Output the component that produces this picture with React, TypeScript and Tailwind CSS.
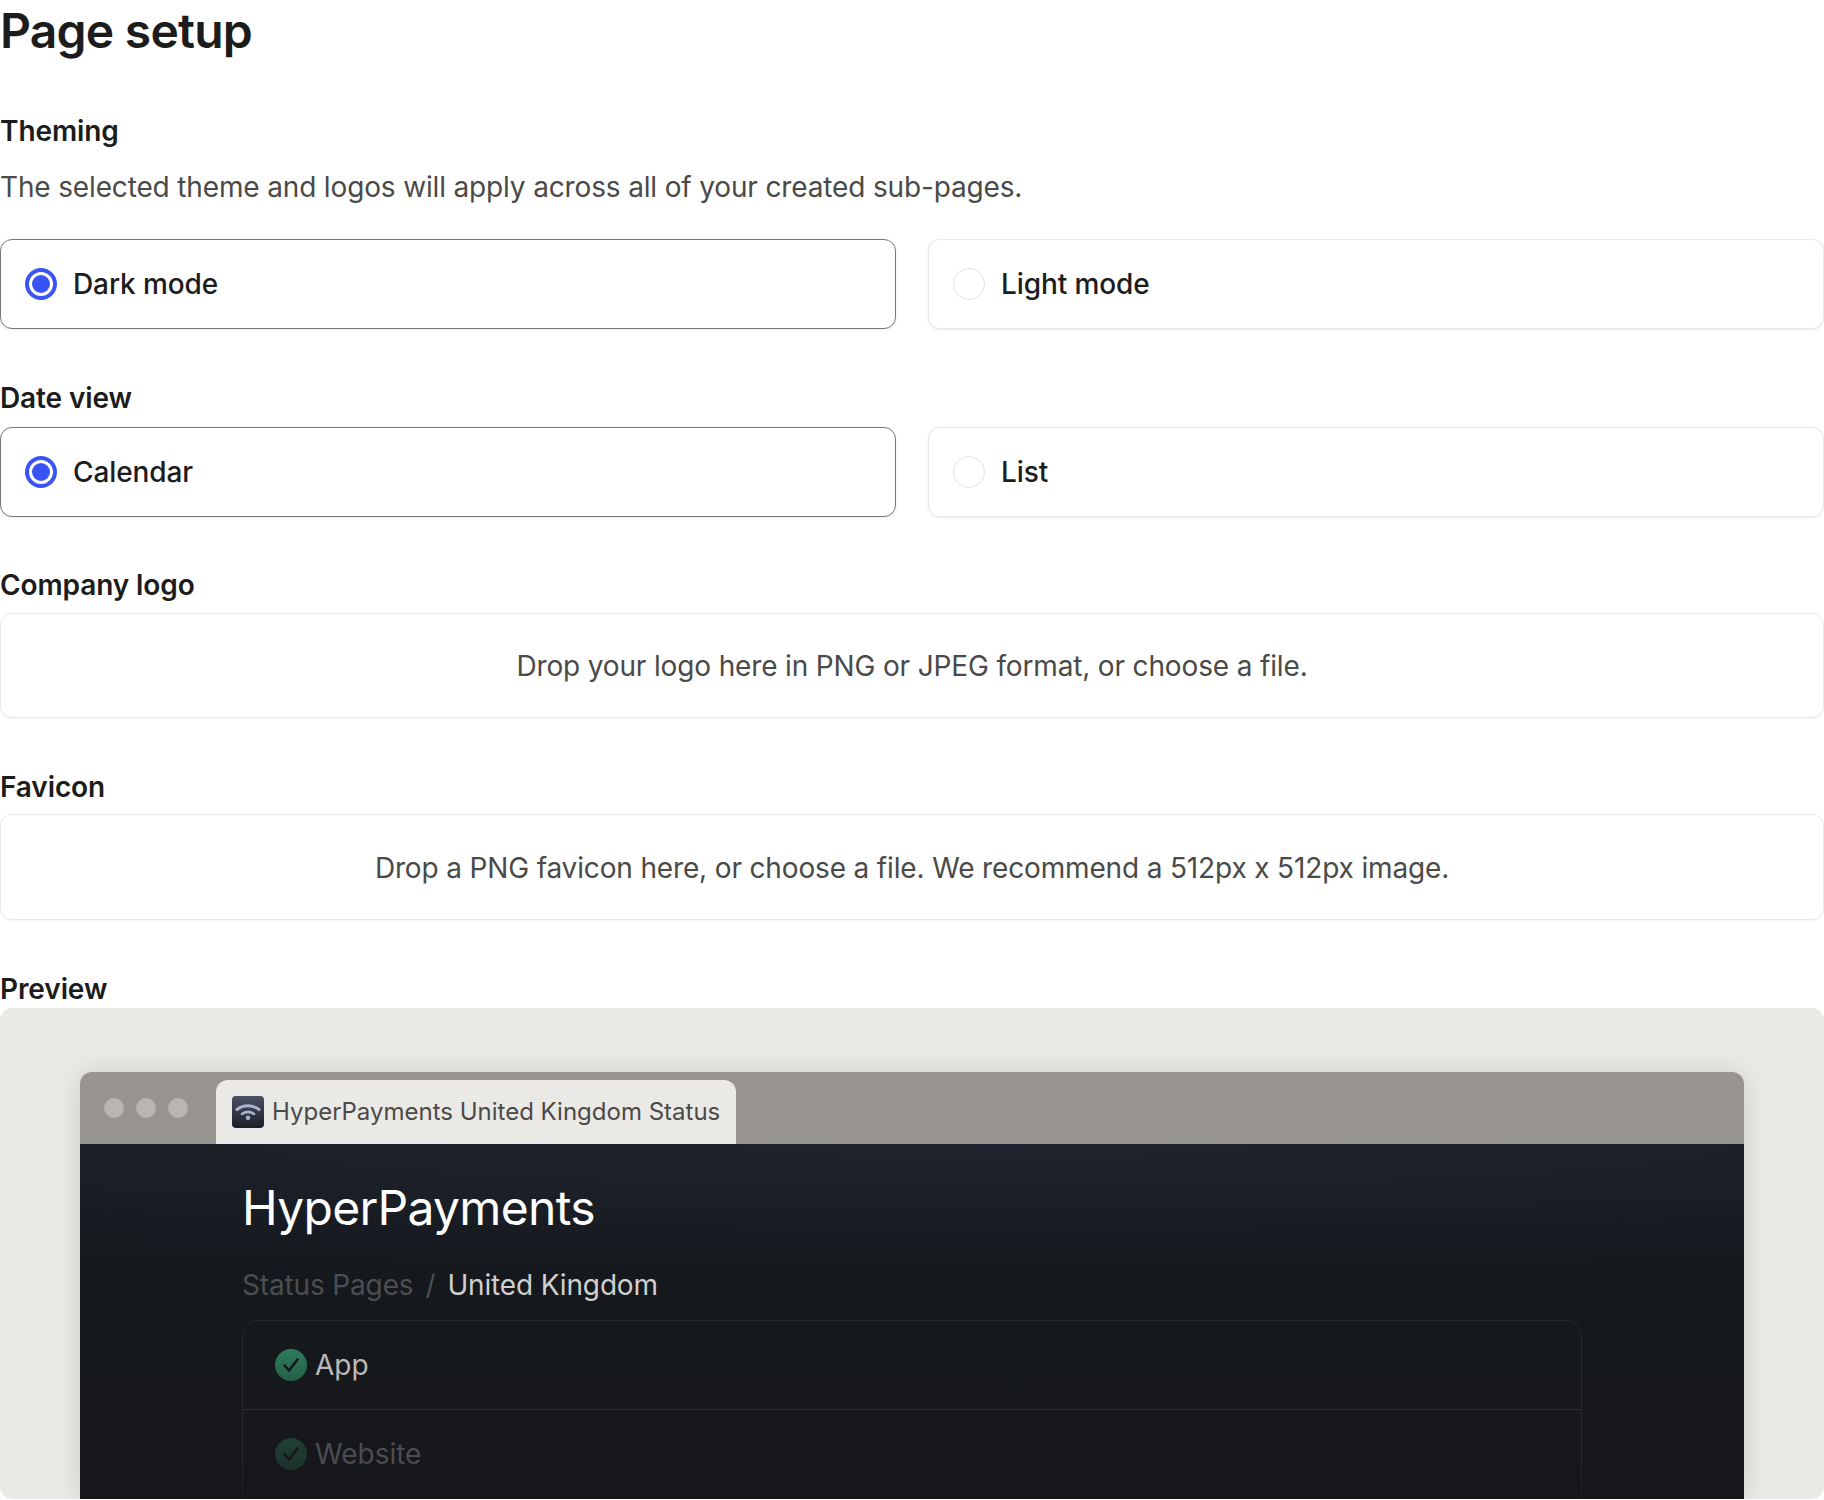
const Radio = ({ checked }: { checked: boolean }) => {
    if (checked) {
        return (
            <span className="flex h-8 w-8 shrink-0 items-center justify-center rounded-full border-4 border-[#3a53f5] bg-white">
                <span className="h-[18px] w-[18px] rounded-full bg-[#3a53f5]"></span>
            </span>
        );
    }
    return <span className="h-8 w-8 shrink-0 rounded-full border border-[#e4e4e2] bg-white"></span>;
};

const Option = ({ label, checked }: { label: string; checked: boolean }) => (
    <div className={`flex h-[89.5px] items-center gap-4 rounded-xl border bg-white px-6 shadow-[0_1px_3px_rgba(0,0,0,0.08)] ${checked ? "border-[#77777a]" : "border-[#e8e8e6]"}`}>
        <Radio checked={checked} />
        <span className="text-[28px] font-medium leading-8 tracking-[-0.1px] text-[#1c1c1c]">{label}</span>
    </div>
);

const Label = ({ children, className }: { children: string; className: string }) => (
    <h3 className={`text-[28px] font-semibold leading-8 tracking-[-0.1px] text-[#1c1c1c] ${className}`}>{children}</h3>
);

const DropZone = ({ text, className }: { text: string; className: string }) => (
    <div className={`flex items-center justify-center rounded-xl border border-[#e8e8e6] bg-white text-[28px] leading-8 tracking-[-0.15px] text-[#4a4a48] shadow-[0_1px_2px_rgba(0,0,0,0.04)] ${className}`}>
        {text}
    </div>
);

const CheckIcon = () => (
    <svg width="32" height="32" viewBox="0 0 32 32" className="shrink-0">
        <defs>
            <linearGradient id="okGreen" x1="0" y1="0" x2="0" y2="1">
                <stop offset="0" stopColor="#2f7d5c" />
                <stop offset="1" stopColor="#265f49" />
            </linearGradient>
        </defs>
        <circle cx="16" cy="16" r="16" fill="url(#okGreen)" />
        <path d="M9.5 16.5l4.5 5L22.5 10.5" fill="none" stroke="#15181c" strokeWidth="2.6" strokeLinecap="round" strokeLinejoin="round" />
    </svg>
);

const WifiIcon = () => (
    <svg width="32" height="32" viewBox="0 0 32 32" className="shrink-0">
        <defs>
            <linearGradient id="favBg" x1="0" y1="0" x2="0" y2="1">
                <stop offset="0" stopColor="#4a5166" />
                <stop offset="1" stopColor="#1c1e27" />
            </linearGradient>
        </defs>
        <rect width="32" height="32" rx="4" fill="url(#favBg)" />
        <path d="M5 13.5c6.5-5 15.5-5 22 0" fill="none" stroke="#aab5cc" strokeWidth="3" strokeLinecap="round" />
        <path d="M10 18c3.6-2.6 8.4-2.6 12 0" fill="none" stroke="#aab5cc" strokeWidth="2.6" strokeLinecap="round" />
        <circle cx="16" cy="21.8" r="2.2" fill="#aab5cc" />
    </svg>
);

const App = () => {
    return (
        <main className="h-[1500px] overflow-hidden bg-white font-['Inter',sans-serif]">
            <h1 className="text-[48px] font-semibold leading-[62px] tracking-[-0.76px] text-[#1c1c1c]">Page setup</h1>

            <Label className="mt-[53px]">Theming</Label>
            <p className="mt-6 text-[28px] leading-8 tracking-[-0.15px] text-[#4a4a48]">The selected theme and logos will apply across all of your created sub-pages.</p>
            <section className="mt-9 grid grid-cols-2 gap-8">
                <Option label="Dark mode" checked />
                <Option label="Light mode" checked={false} />
            </section>

            <Label className="mt-[53.5px]">Date view</Label>
            <section className="mt-[13px] grid grid-cols-2 gap-8">
                <Option label="Calendar" checked />
                <Option label="List" checked={false} />
            </section>

            <Label className="mt-[52.5px]">Company logo</Label>
            <DropZone className="mt-3 h-[105px]" text="Drop your logo here in PNG or JPEG format, or choose a file." />

            <Label className="mt-[53px]">Favicon</Label>
            <DropZone className="mt-[11px] h-[106px] pt-px" text="Drop a PNG favicon here, or choose a file. We recommend a 512px x 512px image." />

            <Label className="mt-[53px]">Preview</Label>
            <section className="mt-[3px] h-[491px] overflow-hidden rounded-xl bg-[#eae9e5] px-20 pt-16">
                <div className="h-[427px] overflow-hidden rounded-t-xl shadow-[0_0_24px_rgba(0,0,0,0.12)]">
                    <div className="flex h-[72px] items-end gap-[28px] bg-[#98948f] pl-6">
                        <div className="flex h-[64px] items-center gap-3 self-end pb-2">
                            <span className="h-5 w-5 rounded-full bg-[#b9b6b0]"></span>
                            <span className="h-5 w-5 rounded-full bg-[#b9b6b0]"></span>
                            <span className="h-5 w-5 rounded-full bg-[#b9b6b0]"></span>
                        </div>
                        <div className="flex h-16 w-[520px] items-center gap-2 rounded-t-xl bg-[#eae9e5] pl-4 text-[24px] leading-8 text-[#4a4a48]">
                            <WifiIcon />
                            <span className="whitespace-nowrap">HyperPayments United Kingdom Status</span>
                        </div>
                    </div>
                    <div className="h-[355px] bg-[radial-gradient(ellipse_130%_125px_at_55%_0%,#1f2530_0%,rgba(21,24,28,0)_100%),linear-gradient(180deg,#15181c_60%,#16171b_100%)] px-[162px] pt-[32px]">
                        <h2 className="text-[48px] font-normal leading-[64px] tracking-[-0.7px] text-white">HyperPayments</h2>
                        <div className="mt-[29px] flex items-center gap-3 text-[28px] leading-8 tracking-[-0.15px]">
                            <span className="text-[#4c4e51]">Status Pages</span>
                            <span className="text-[#4c4e51]">/</span>
                            <span className="text-[#d0d0d0]">United Kingdom</span>
                        </div>
                        <div className="relative mt-[19px] h-[200px] rounded-t-2xl border border-[#26282c]">
                            <div className="flex h-[89px] items-center gap-2 border-b border-[#2a2c30] pl-[32px] text-[28px] leading-8 text-[#bcbab8]">
                                <CheckIcon />
                                <span>App</span>
                            </div>
                            <div className="flex h-[88px] items-center gap-2 pl-[32px] text-[28px] leading-8 text-[#4b4d51]">
                                <span className="flex opacity-40"><CheckIcon /></span>
                                <span>Website</span>
                            </div>
                            <div className="absolute inset-x-[-1px] bottom-[-1px] h-[60px] bg-gradient-to-b from-transparent to-[#15171b]"></div>
                        </div>
                    </div>
                </div>
            </section>
        </main>
    );
};

export default App;
